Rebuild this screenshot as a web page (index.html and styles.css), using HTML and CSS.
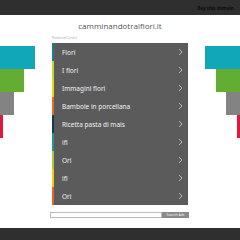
FILE: index.html
```html
<!DOCTYPE html>
<html lang="it">
<head>
    <meta charset="UTF-8">
    <meta name="viewport" content="width=device-width, initial-scale=1.0">
    <title>camminandotraifiori.it</title>
    <link rel="stylesheet" href="styles.css">
</head>
<body>
    <div class="topbar">
        <a href="#" class="buy">Buy this domain.</a>
    </div>

    <div class="page">
        <!-- Barre laterali -->
        <div class="side side-left">
            <div class="bar teal w35"></div>
            <div class="bar green w24"></div>
            <div class="bar gray w14"></div>
            <div class="bar red w3"></div>
        </div>

        <div class="content">
            <h1 class="domain">camminandotraifiori.it</h1>
            <div class="related">Related Links</div>

            <ul class="links">
                <li class="c1"><span>Fiori</span><svg viewBox="0 0 5 8"><polyline points="1,1 4,4 1,7"/></svg></li>
                <li class="c2"><span>I fiori</span><svg viewBox="0 0 5 8"><polyline points="1,1 4,4 1,7"/></svg></li>
                <li class="c3"><span>Immagini fiori</span><svg viewBox="0 0 5 8"><polyline points="1,1 4,4 1,7"/></svg></li>
                <li class="c4"><span>Bambole in porcellana</span><svg viewBox="0 0 5 8"><polyline points="1,1 4,4 1,7"/></svg></li>
                <li class="c5"><span>Ricetta pasta di mais</span><svg viewBox="0 0 5 8"><polyline points="1,1 4,4 1,7"/></svg></li>
                <li class="c6"><span>ifi</span><svg viewBox="0 0 5 8"><polyline points="1,1 4,4 1,7"/></svg></li>
                <li class="c7"><span>Ori</span><svg viewBox="0 0 5 8"><polyline points="1,1 4,4 1,7"/></svg></li>
                <li class="c8"><span>ifi</span><svg viewBox="0 0 5 8"><polyline points="1,1 4,4 1,7"/></svg></li>
                <li class="c9"><span>Ori</span><svg viewBox="0 0 5 8"><polyline points="1,1 4,4 1,7"/></svg></li>
            </ul>

            <form class="search">
                <input type="text">
                <button type="button">Search Ads</button>
            </form>
        </div>

        <div class="side side-right">
            <div class="bar teal w35"></div>
            <div class="bar green w24"></div>
            <div class="bar gray w14"></div>
            <div class="bar red w3"></div>
        </div>
    </div>

    <div class="footer"></div>
</body>
</html>
```

FILE: styles.css
```css
body {
    font-family: 'Noto Sans', sans-serif;
    margin: 0;
    padding: 0;
    background: #fff;
    color: #444;
    width: 240px;
    height: 240px;
    display: flex;
    flex-direction: column;
    overflow: hidden;
}

.topbar {
    height: 15px;
    background: #2f2f2f;
    display: flex;
    align-items: center;
    justify-content: flex-end;
    padding-right: 5px;
}

.buy {
    font-size: 4.5px;
    font-weight: bold;
    color: #0c0c0c;
    text-decoration: none;
}

.page {
    flex: 1;
    display: grid;
    grid-template-columns: 52px 136px 52px;
}

.side {
    padding-top: 31px;
    display: flex;
    flex-direction: column;
}

.side-left {
    align-items: flex-start;
}

.side-right {
    align-items: flex-end;
}

.bar {
    height: 23px;
}

.teal { background: #10a8b8; }
.green { background: #62ad32; }
.gray { background: #838383; }
.red { background: #e0173f; }

.w35 { width: 35px; }
.w24 { width: 24px; }
.w14 { width: 14px; }
.w3 { width: 3px; }

.content {
    display: flex;
    flex-direction: column;
    min-width: 0;
}

.domain {
    margin: 6px 0 0;
    font-family: 'Open Sans', sans-serif;
    font-size: 8px;
    line-height: 10px;
    font-weight: normal;
    text-align: center;
    color: #555;
}

.related {
    margin-top: 4px;
    font-size: 4px;
    line-height: 6px;
    color: #b0b0b0;
}

.links {
    list-style: none;
    margin: 2px 0 0;
    padding: 0;
    background: #5b5b5b;
}

.links li {
    height: 18px;
    display: flex;
    align-items: center;
    justify-content: space-between;
    padding: 0 5px 0 8px;
    border-left: 2px solid #5b5b5b;
    font-size: 6.5px;
    color: #f2f2f2;
}

.links svg {
    width: 5px;
    height: 8px;
    fill: none;
    stroke: #d0d0d0;
    stroke-width: 0.8;
}

.c1 { border-left-color: #1d7d8c !important; }
.c2 { border-left-color: #c4d631 !important; }
.c3 { border-left-color: #f3d20e !important; }
.c4 { border-left-color: #e86c26 !important; }
.c5 { border-left-color: #0e3a5c !important; }
.c6 { border-left-color: #22968a !important; }
.c7 { border-left-color: #a8c93c !important; }
.c8 { border-left-color: #f2cb12 !important; }
.c9 { border-left-color: #e4652a !important; }

.search {
    margin: 7px -1px 0 -2px;
    display: flex;
    height: 6px;
}

.search input {
    flex: 1;
    min-width: 0;
    width: 0;
    margin: 0;
    padding: 0;
    height: 6px;
    box-sizing: border-box;
    border: 1px solid #bbb;
    background: #fff;
}

.search button {
    flex: none;
    width: 27px;
    margin: 0;
    padding: 0;
    height: 6px;
    border: none;
    background: #8a8a8a;
    color: #eee;
    font-size: 3.5px;
    line-height: 6px;
    font-family: 'Noto Sans', sans-serif;
}

.footer {
    height: 12px;
    background: #2f2f2f;
}
```
